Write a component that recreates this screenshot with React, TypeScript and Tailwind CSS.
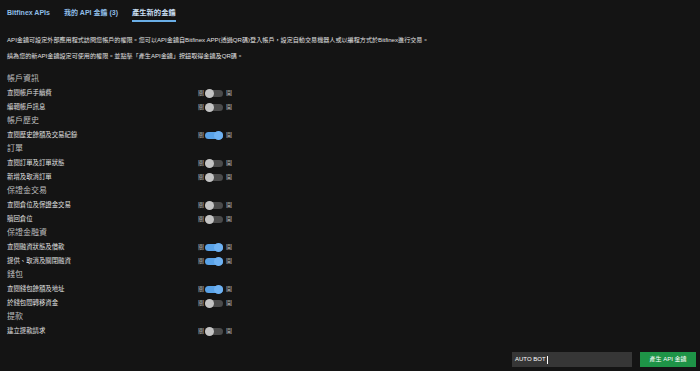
import React from "react";

type Row = { label: string; on: boolean };
type Section = { title: string; rows: Row[] };

const sections: Section[] = [
  { title: "帳戶資訊", rows: [ { label: "查閱帳戶手續費", on: false }, { label: "編輯帳戶訊息", on: false } ] },
  { title: "帳戶歷史", rows: [ { label: "查閱歷史餘額及交易紀錄", on: true } ] },
  { title: "訂單", rows: [ { label: "查閱訂單及訂單狀態", on: false }, { label: "新增及取消訂單", on: false } ] },
  { title: "保證金交易", rows: [ { label: "查閱倉位及保證金交易", on: false }, { label: "贖回倉位", on: false } ] },
  { title: "保證金融資", rows: [ { label: "查閱融資狀態及借款", on: true }, { label: "提供、取消及關閉融資", on: true } ] },
  { title: "錢包", rows: [ { label: "查閱錢包餘額及地址", on: true }, { label: "於錢包間轉移資金", on: false } ] },
  { title: "提款", rows: [ { label: "建立提款請求", on: false } ] },
];

function Toggle({ on }: { on: boolean }) {
  return (
    <div className="flex items-center">
      <span className="text-[6px] leading-none text-[#b8b8b8]">關</span>
      <div
        className={
          "relative ml-[1px] w-[18px] h-[7px] rounded-full " +
          (on ? "bg-[#5aa3e8]" : "bg-[#4a4a4a]")
        }
      >
        <div
          className={
            "absolute top-[-1px] w-[9px] h-[9px] rounded-full " +
            (on ? "right-0 bg-[#6fb2f2]" : "left-0 bg-[#c4c4c4]")
          }
        />
      </div>
      <span className="ml-[3px] text-[6px] leading-none text-[#b8b8b8]">開</span>
    </div>
  );
}

export default function App() {
  return (
    <div
      className="w-[700px] h-[371px] bg-[#141414] flex flex-col text-[#e2e2e2] overflow-hidden"
      style={{ fontFamily: '"Liberation Sans", "Noto Sans CJK TC", sans-serif' }}
    >
      <div className="flex px-[7px] gap-[14px]">
        <div className="pt-[8px] pb-[2px] leading-[10px] text-[7px] font-semibold text-[#8fbde6] border-b-2 border-transparent">
          Bitfinex APIs
        </div>
        <div className="pt-[8px] pb-[2px] leading-[10px] text-[7px] font-semibold text-[#8fbde6] border-b-2 border-transparent">
          我的 API 金鑰 (3)
        </div>
        <div className="pt-[8px] pb-[2px] leading-[10px] text-[7.3px] font-semibold text-[#c9dff2] border-b-2 border-[#6aaee6]">
          產生新的金鑰
        </div>
      </div>

      <div className="px-[7px] mt-[14px] text-[6.1px] leading-[8px] text-[#e0e0e0]">
        API金鑰可設定外部應用程式訪問您帳戶的權限。您可以API金鑰自Bitfinex APP(透過QR碼)登入帳戶，設定自動交易機器人或以編程方式於Bitfinex進行交易。
      </div>
      <div className="px-[7px] mt-[8px] text-[6.1px] leading-[8px] text-[#e0e0e0]">
        請為您的新API金鑰設定可使用的權限。並點擊「產生API金鑰」按鈕取得金鑰及QR碼。
      </div>

      <div className="mt-[12px] flex flex-col px-[7px]">
        {sections.map((s) => (
          <div key={s.title} className="flex flex-col">
            <div className="h-[14px] pb-[1px] flex items-center text-[8px] text-[#bdbdbd]">{s.title}</div>
            {s.rows.map((r) => (
              <div key={r.label} className="h-[14px] flex items-center">
                <div className="w-[191px] text-[6.4px] text-[#e0e0e0]">{r.label}</div>
                <Toggle on={r.on} />
              </div>
            ))}
          </div>
        ))}
      </div>

      <div className="mt-auto pb-[4px] pr-[4px] flex justify-end items-center gap-[8px]">
        <div className="w-[120px] h-[15px] bg-[#363636] flex items-center px-[3px] text-[6px] text-white">
          AUTO BOT<span className="ml-[1px] w-[1px] h-[8px] bg-white" />
        </div>
        <div className="w-[56px] h-[15px] bg-[#1e9447] flex items-center justify-center text-[6px] text-white">
          產生 API 金鑰
        </div>
      </div>
    </div>
  );
}
